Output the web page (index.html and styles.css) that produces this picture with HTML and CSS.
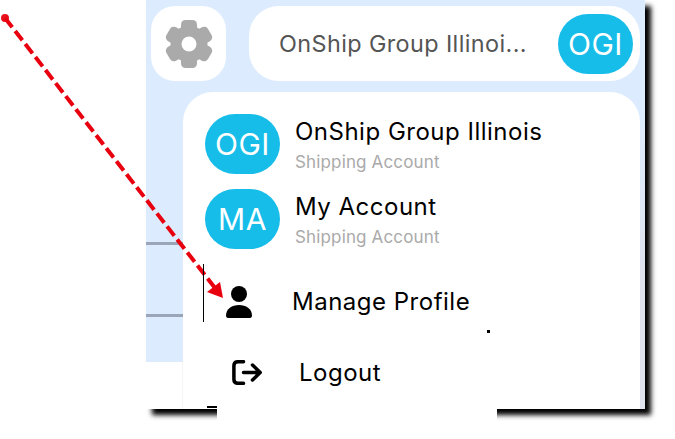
FILE: index.html
```html
<!DOCTYPE html>
<html lang="en">
<head>
<meta charset="utf-8">
<title>Account menu</title>
<link rel="stylesheet" href="styles.css">
</head>
<body>
<div class="stage">
  <div class="panel">
    <header class="top">
      <div class="tile">
        <svg class="gear" viewBox="-24 -24 48 48" aria-hidden="true">
          <g fill="#aaaaaa">
            <circle r="18.5"/>
            <rect x="-8" y="-24" width="16" height="14" rx="4.5"/>
            <rect x="-8" y="-24" width="16" height="14" rx="4.5" transform="rotate(60)"/>
            <rect x="-8" y="-24" width="16" height="14" rx="4.5" transform="rotate(120)"/>
            <rect x="-8" y="-24" width="16" height="14" rx="4.5" transform="rotate(180)"/>
            <rect x="-8" y="-24" width="16" height="14" rx="4.5" transform="rotate(240)"/>
            <rect x="-8" y="-24" width="16" height="14" rx="4.5" transform="rotate(300)"/>
          </g>
          <circle r="7.5" fill="#fff"/>
        </svg>
      </div>
      <div class="pill">
        <span class="pill-name">OnShip Group Illinoi...</span>
        <span class="avatar">OGI</span>
      </div>
    </header>
    <section class="card">
      <div class="account">
        <span class="avatar">OGI</span>
        <div class="info">
          <div class="name">OnShip Group Illinois</div>
          <div class="role">Shipping Account</div>
        </div>
      </div>
      <div class="account">
        <span class="avatar">MA</span>
        <div class="info">
          <div class="name">My Account</div>
          <div class="role">Shipping Account</div>
        </div>
      </div>
      <div class="menu-item item-profile">
        <svg class="icon-person" viewBox="0 0 26 32" aria-hidden="true">
          <circle cx="13" cy="8" r="8"/>
          <path d="M0 29.5C0 23 6 19 13 19s13 4 13 10.500c0 1.500-.8 2.500-2 2.500H2c-1.200 0-2-1-2-2.500z"/>
        </svg>
        <span class="menu-label">Manage Profile</span>
      </div>
      <div class="menu-item item-logout">
        <svg class="icon-logout" viewBox="0 0 30 25" aria-hidden="true">
          <path d="M11.500 1.700H6C3.500 1.700 1.900 3.200 1.900 5.700v13.600c0 2.500 1.600 4 4.100 4h5.500" />
          <path d="M11.500 12.500H28M20.500 5l7.700 7.500-7.700 7.500" />
        </svg>
        <span class="menu-label">Logout</span>
      </div>
    </section>
  </div>
  <div class="shadow-cover"></div>

  <svg class="pointer" viewBox="0 0 675 439" aria-hidden="true">
    <circle cx="5" cy="18" r="4" fill="#e8101c"/>
    <path d="M5 18L215 288" fill="none" stroke="#e8000f" stroke-width="4" stroke-dasharray="11.800 4.700"/>
    <path d="M223 298L207 292L220 282Z" fill="#e8000f"/>
  </svg>
  <span class="cursor-line"></span>
  <span class="stray-dot"></span>
  <span class="stray-stub"></span>
</div>
</body>
</html>
```

FILE: styles.css
```css
* {
  box-sizing: border-box;
}

html,
body {
  margin: 0;
  height: 100%;
  background: #fff;
}

body {
  overflow: hidden;
  font-family: "Inter", "Liberation Sans", sans-serif;
}

.stage {
  position: relative;
  width: 675px;
  height: 439px;
}

.panel {
  margin-left: 146px;
  width: 499px;
  height: 409px;
  padding: 6px 5px 0;
  box-shadow: 6px 6px 5px #000;
  background:
    linear-gradient(#f5f5f5, #f5f5f5) 36px 362px / 1px 47px no-repeat,
    linear-gradient(#9aa5b8, #9aa5b8) 0 242px / 37px 3px no-repeat,
    linear-gradient(#9aa5b8, #9aa5b8) 0 314px / 37px 3px no-repeat,
    linear-gradient(#fff, #fff) 0 362px / 37px 47px no-repeat,
    linear-gradient(#dcecfe 0, #dcecfe 25%, #dee2ec 70%) 100% 0 / 5px 100% no-repeat,
    #dcecfe;
}

.top {
  display: flex;
  gap: 23px;
  height: 75px;
}

.tile {
  display: flex;
  align-items: center;
  justify-content: center;
  width: 75px;
  height: 75px;
  background: #fff;
  border-radius: 24px;
}

.gear {
  width: 48px;
  height: 48px;
}

.pill {
  display: flex;
  align-items: center;
  justify-content: space-between;
  flex: 1;
  padding: 0 7px 0 30px;
  background: #fff;
  border-radius: 30px;
}

.pill-name {
  color: #555;
  font-size: 23.400px;
  letter-spacing: 0.4px;
  white-space: nowrap;
}

.avatar {
  display: flex;
  align-items: center;
  justify-content: center;
  flex: none;
  width: 75px;
  height: 60px;
  background: #17bde9;
  border-radius: 30px;
  color: #fff;
  font-size: 30px;
  letter-spacing: 0.5px;
}

.card {
  margin: 11px 0 0 32px;
  height: 317px;
  padding: 22px 0 0 22px;
  background: #fff;
  border-radius: 30px 30px 0 0;
}

.account {
  display: flex;
  align-items: flex-start;
  gap: 15px;
  height: 60px;
  margin-bottom: 15px;
}

.info {
  padding-top: 3px;
}

.name {
  color: #000;
  font-size: 24px;
  line-height: 30px;
  letter-spacing: 0.5px;
}

.role {
  margin-top: 5px;
  color: #aaa;
  font-size: 17px;
  line-height: 20px;
  letter-spacing: 0.15px;
}

.menu-item {
  display: flex;
  align-items: center;
  height: 71px;
}

.item-profile {
  margin-top: 17px;
  padding-left: 21px;
  gap: 40px;
}

.item-logout {
  padding-left: 27px;
  gap: 37px;
}

.menu-label {
  color: #000;
  font-size: 24px;
  letter-spacing: 0.5px;
}

.icon-person {
  width: 26px;
  height: 32px;
  fill: #000;
}

.icon-logout {
  width: 30px;
  height: 25px;
  fill: none;
  stroke: #000;
  stroke-width: 3.500;
  stroke-linecap: round;
  stroke-linejoin: round;
}

.shadow-cover {
  margin-left: 217px;
  width: 280px;
  height: 14px;
  background: #fff;
}

.pointer {
  position: absolute;
  left: 0;
  top: 0;
  width: 675px;
  height: 439px;
}

.cursor-line {
  position: absolute;
  left: 203px;
  top: 264px;
  width: 1px;
  height: 58px;
  background: #000;
}

.stray-dot {
  position: absolute;
  left: 487px;
  top: 330px;
  width: 3px;
  height: 3px;
  background: #000;
}

.stray-stub {
  position: absolute;
  left: 207px;
  top: 406px;
  width: 10px;
  height: 2px;
  background: #000;
}
```
